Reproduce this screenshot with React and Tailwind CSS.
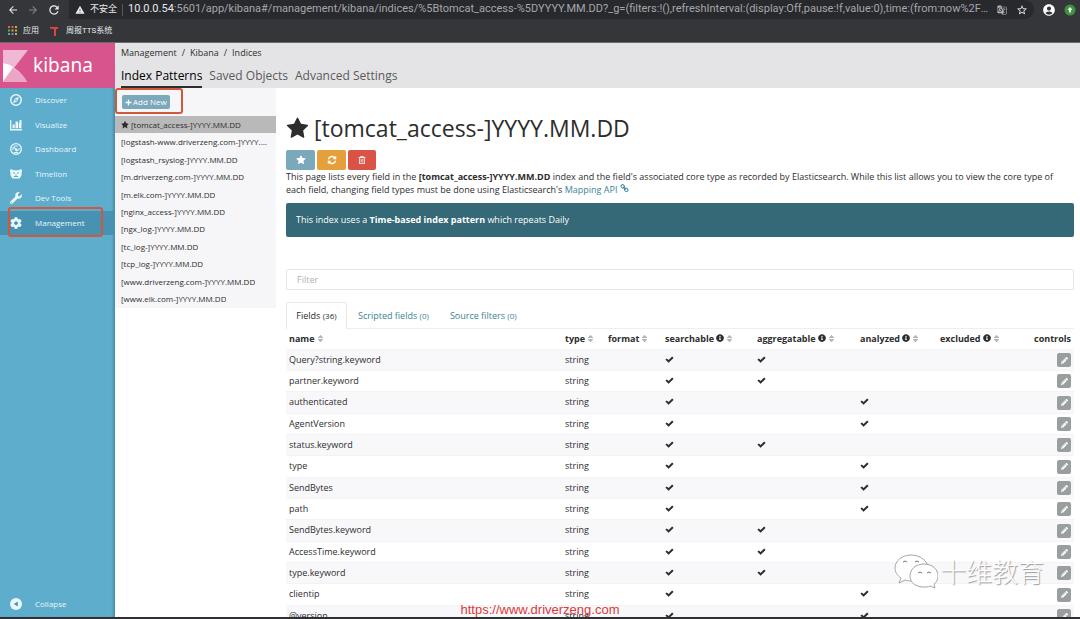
import React from 'react';
import { FaCog, FaInfoCircle, FaPencilAlt, FaPlus, FaRegTrashAlt, FaSort, FaWrench } from 'react-icons/fa';
import { MdAccountCircle, MdArrowBack, MdArrowForward, MdGTranslate, MdRefresh, MdStarBorder, MdWarning } from 'react-icons/md';

const StarIcon = ({ className }) => (
  <svg viewBox="0 0 1792 1792" fill="currentColor" className={className}>
    <path d="M1728 647q0 22-26 48l-363 354 86 500q1 7 1 20 0 21-10.5 35.5t-30.5 14.5q-19 0-40-12l-449-236-449 236q-22 12-40 12-21 0-31.5-14.5t-10.5-35.5q0-6 2-20l86-500-364-354q-25-27-25-48 0-37 56-46l502-73 225-455q19-41 49-41t49 41l225 455 502 73q56 9 56 46z" />
  </svg>
);

const RefreshIcon = ({ className }) => (
  <svg viewBox="0 0 1792 1792" fill="currentColor" className={className}>
    <path d="M1639 1056q0 5-1 7-64 268-268 434.5t-478 166.5q-146 0-282.5-55t-243.5-157l-129 129q-19 19-45 19t-45-19-19-45v-448q0-26 19-45t45-19h448q26 0 45 19t19 45-19 45l-137 137q71 66 161 102t187 36q134 0 250-65t186-179q11-17 53-117 8-23 30-23h192q13 0 22.5 9.5t9.5 22.5zm25-800v448q0 26-19 45t-45 19h-448q-26 0-45-19t-19-45 19-45l138-138q-148-137-349-137-134 0-250 65t-186 179q-11 17-53 117-8 23-30 23h-199q-13 0-22.5-9.5t-9.5-22.5v-7q65-268 270-434.5t480-166.5q146 0 284 55.5t245 156.5l130-129q19-19 45-19t45 19 19 45z" />
  </svg>
);

const ChainIcon = ({ className }) => (
  <svg viewBox="0 0 1792 1792" fill="currentColor" className={className}>
    <path d="M1520 1216q0-40-28-68l-208-208q-28-28-68-28-42 0-72 32 3 3 19 18.5t21.5 21.5 15 19 13 25.5 3.5 27.5q0 40-28 68t-68 28q-15 0-27.5-3.5t-25.5-13-19-15-21.5-21.5-18.5-19q-33 31-33 73 0 40 28 68l206 207q27 27 68 27 40 0 68-26l147-146q28-28 28-67zm-703-705q0-40-28-68l-206-207q-28-28-68-28-39 0-68 27l-147 146q-28 28-28 67 0 40 28 68l208 208q27 27 68 27 42 0 72-31-3-3-19-18.500t-21.500-21.500-15-19-13-25.500-3.500-27.500q0-40 28-68t68-28q15 0 27.500 3.500t25.500 13 19 15 21.500 21.500 18.500 19q33-31 33-73zm895 705q0 120-85 203l-147 146q-83 83-203 83-121 0-204-85l-206-207q-83-83-83-203 0-123 88-209l-88-88q-86 88-208 88-120 0-204-84l-208-208q-84-84-84-204t85-203l147-146q83-83 203-83 121 0 204 85l206 207q83 83 83 203 0 123-88 209l88 88q86-88 208-88 120 0 204 84l208 208q84 84 84 204z" />
  </svg>
);

const CheckIcon = () => (
  <svg viewBox="0 0 1792 1792" fill="currentColor" className="w-[9px] h-[9px]" role="img" aria-label="yes">
    <path d="M1671 566q0 40-28 68l-724 724-136 136q-28 28-68 28t-68-28l-136-136-362-362q-28-28-28-68t28-68l136-136q28-28 68-28t68 28l294 295 656-657q28-28 68-28t68 28l136 136q28 28 28 68z" />
  </svg>
);

const DiscoverIcon = () => (
  <svg viewBox="0 0 24 24" className="w-3 h-3">
    <circle cx="12" cy="12" r="10.5" fill="none" stroke="currentColor" strokeWidth="3" />
    <path fillRule="evenodd" d="M18 5.5 14.6 14.6 6 18.5 9.4 9.4zM12 10.4a1.7 1.7 0 1 0 0 3.4 1.7 1.7 0 0 0 0-3.4z" fill="currentColor" />
  </svg>
);

const VisualizeIcon = () => (
  <svg viewBox="0 0 24 24" fill="currentColor" className="w-3 h-3">
    <path d="M0 2h2.6v18.200H24V23H0zM5 11h4.500v7.500H5zM11 5h5v13.500h-5zM17.500 8h1.500V2h4v16.500h-5.500z" />
  </svg>
);

const DashboardIcon = () => (
  <svg viewBox="0 0 24 24" className="w-3 h-3" fill="none" stroke="currentColor">
    <circle cx="12" cy="12" r="10.7" strokeWidth="2.6" />
    <path d="M6 14.5a6.5 6.5 0 0 1 9.500-7.800M18 10a6.500 6.500 0 0 1-.5 5" strokeWidth="2" />
    <path d="m7.500 9 5.500 4.500" strokeWidth="2.400" />
    <circle cx="13" cy="14" r="2.400" fill="currentColor" />
    <path d="M8 19h8" strokeWidth="2" />
  </svg>
);

const TimelionIcon = () => (
  <svg viewBox="0 0 24 24" fill="currentColor" className="w-3 h-3">
    <path fillRule="evenodd" d="M0 3h5l2 1.500h10L19 3h5v5l-1 2v5l-4 6H5l-4-6v-5L0 8zM6.500 9v2.600h3V9zM14.500 9v2.600h3V9zM10 13.500l1.300 1.700v1H8v1.600h8v-1.600h-3.300v-1l1.300-1.700z" />
  </svg>
);

const CollapseIcon = () => (
  <svg viewBox="0 0 24 24" className="w-3 h-3">
    <circle cx="12" cy="12" r="12" fill="currentColor" />
    <path d="M15.500 7v10L7.500 12z" fill="#4a93b3" />
  </svg>
);

const navItems = [
  { label: 'Discover', icon: DiscoverIcon },
  { label: 'Visualize', icon: VisualizeIcon },
  { label: 'Dashboard', icon: DashboardIcon },
  { label: 'Timelion', icon: TimelionIcon },
  { label: 'Dev Tools', icon: () => <FaWrench className="w-3 h-3" /> },
  { label: 'Management', icon: () => <FaCog className="w-3 h-3" />, active: true },
];

const indices = [
  '[tomcat_access-]YYYY.MM.DD',
  '[logstash-www.driverzeng.com-]YYYY.MM.DD',
  '[logstash_rsyslog-]YYYY.MM.DD',
  '[m.driverzeng.com-]YYYY.MM.DD',
  '[m.elk.com-]YYYY.MM.DD',
  '[nginx_access-]YYYY.MM.DD',
  '[ngx_log-]YYYY.MM.DD',
  '[tc_log-]YYYY.MM.DD',
  '[tcp_log-]YYYY.MM.DD',
  '[www.driverzeng.com-]YYYY.MM.DD',
  '[www.elk.com-]YYYY.MM.DD',
];

const columns = [
  { label: 'name', width: '' },
  { label: 'type', width: 'w-[43px]' },
  { label: 'format', width: 'w-[57px]' },
  { label: 'searchable', width: 'w-[92px]', info: true },
  { label: 'aggregatable', width: 'w-[103px]', info: true },
  { label: 'analyzed', width: 'w-[80px]', info: true },
  { label: 'excluded', width: 'w-[93px]', info: true },
];

const fields = [
  { name: 'Query?string.keyword', aggregatable: true },
  { name: 'partner.keyword', aggregatable: true },
  { name: 'authenticated', analyzed: true },
  { name: 'AgentVersion', analyzed: true },
  { name: 'status.keyword', aggregatable: true },
  { name: 'type', analyzed: true },
  { name: 'SendBytes', analyzed: true },
  { name: 'path', analyzed: true },
  { name: 'SendBytes.keyword', aggregatable: true },
  { name: 'AccessTime.keyword', aggregatable: true },
  { name: 'type.keyword', aggregatable: true },
  { name: 'clientip', analyzed: true },
  { name: '@version', analyzed: true },
];

const appDots = ['#e06055', '#e06055', '#d9a441', '#5fae6b', '#d9a441', '#d9a441', '#5fae6b', '#5b8def', '#d9a441'];

function BrowserBar() {
  return (
    <div className="shrink-0 bg-[#35363a] border-b border-[#6b6b6e] text-[#e8eaed] font-['Roboto','Noto_Sans_CJK_SC',sans-serif] text-[11px]">
      <div className="flex items-center h-[19px] pl-[7px] pr-1">
        <button aria-label="Back"><MdArrowBack className="w-3 h-3" /></button>
        <button aria-label="Forward" className="ml-2 text-[#85868a]"><MdArrowForward className="w-3 h-3" /></button>
        <button aria-label="Reload" className="ml-2"><MdRefresh className="w-[14px] h-[14px]" /></button>
        <div className="flex flex-1 items-center min-w-0 h-full ml-2 mr-2 pl-[6px] pr-[6px] bg-[#28292d] rounded-r-full">
          <MdWarning className="shrink-0 w-[10px] h-[10px]" />
          <span className="shrink-0 ml-[5px] text-[9px]">不安全</span>
          <span className="shrink-0 w-px h-3 mx-[5px] bg-[#55565a]" />
          <span className="flex-1 truncate text-[#a5a7ab]">
            <span className="text-[#e8eaed]">10.0.0.54</span>
            :5601/app/kibana#/management/kibana/indices/%5Btomcat_access-%5DYYYY.MM.DD?_g=(filters:!(),refreshInterval:(display:Off,pause:!f,value:0),time:(from:now%2Fd,mode:quick,to:now%2F...
          </span>
          <button aria-label="Translate" className="ml-2"><MdGTranslate className="w-[10px] h-[10px] text-[#b4b6ba]" /></button>
          <button aria-label="Bookmark" className="ml-[9px]"><MdStarBorder className="w-3 h-3" /></button>
        </div>
        <button aria-label="Profile"><MdAccountCircle className="w-[14px] h-[14px] text-white" /></button>
        <button aria-label="Extension" className="ml-2">
          <svg viewBox="0 0 24 24" className="w-3 h-3">
            <circle cx="12" cy="12" r="11" fill="#3f8f45" />
            <path d="M12 6l5 5.500-3 .5v5h-4v-5l-3-.5z" fill="#e9f7df" />
          </svg>
        </button>
      </div>
      <div className="flex items-center h-[23px] pl-2 text-[8px]">
        <a href="#apps" className="flex items-center gap-[6px]">
          <svg viewBox="0 0 9 9" className="w-[9px] h-[9px]">
            {appDots.map((color, i) => (
              <rect key={i} x={(i % 3) * 3.5} y={Math.floor(i / 3) * 3.5} width="2" height="2" fill={color} />
            ))}
          </svg>
          应用
        </a>
        <a href="#tts" className="flex items-center gap-[6px] ml-[11px]">
          <svg viewBox="0 0 10 10" className="w-[10px] h-[10px]">
            <path d="M0 1h8v2H6v7H4V3L0 2.500z" fill="#d9473f" />
          </svg>
          周报TTS系统
        </a>
      </div>
    </div>
  );
}

function Sidebar() {
  return (
    <aside className="relative z-10 flex flex-col shrink-0 w-[115px] bg-[#5eadcc] text-[#e9f6fb] text-[8px] shadow-[inset_-3px_0_2px_-1px_#4a8fab]">
      <div className="flex items-center h-[45px] pl-[3px] gap-[5px] bg-[#d8548c]">
        <svg viewBox="0 0 25 32" className="w-[25px] h-8 shrink-0">
          <path d="M0 0h25L0 32z" fill="#f0b8d2" />
          <path d="M0 13c9 2 18 8 24 19H0z" fill="#f7d6e4" />
          <path d="M0 13q6 1 10 4L0 31z" fill="#fff" />
          <path d="M10 18q9 5 14 14H0z" fill="#eba6c5" />
        </svg>
        <span className="text-[19px] text-white font-['Noto_Sans','Open_Sans',sans-serif]">kibana</span>
      </div>
      <nav className="flex flex-col h-[147px]">
        {navItems.map((item) => (
          <a
            key={item.label}
            href={`#${item.label}`}
            className={`relative flex flex-1 items-center gap-[13px] pl-[10px] ${item.active ? 'bg-[#4792b3]' : ''}`}
          >
            <span className="w-3"><item.icon /></span>
            {item.label}
            {item.active && <span className="absolute -top-1 -bottom-[2px] left-2 right-3 border-2 border-[#d1583d] rounded-[3px]" />}
          </a>
        ))}
      </nav>
      <button className="flex items-center gap-[13px] h-6 mt-auto mb-px pl-[10px] text-left">
        <CollapseIcon />
        Collapse
      </button>
    </aside>
  );
}

function IndexList() {
  return (
    <div className="shrink-0 self-start w-[161px] bg-[#f6f6f8] text-[8px] text-[#2d2d2d]">
      <div className="relative flex items-center h-[28px] pl-[7px]">
        <button className="flex items-center gap-px h-[14px] px-[3px] rounded-[2px] bg-[#7ba8bb] text-white">
          <FaPlus className="w-[7px] h-[7px]" />
          Add New
        </button>
        <span className="absolute top-0 left-0 w-[68px] h-[26px] border-2 border-[#d1583d] rounded-[3px]" />
      </div>
      <ul className="grid auto-rows-fr h-[192px]">
        {indices.map((name, i) => (
          <li key={name} className={`flex items-center gap-[2px] min-w-0 px-[6px] ${i === 0 ? 'bg-[#b9b9b9]' : ''}`}>
            {i === 0 && <StarIcon className="shrink-0 w-2 h-2" />}
            <a href="#index" className="truncate">{name}</a>
          </li>
        ))}
      </ul>
    </div>
  );
}

function FieldsTable() {
  return (
    <table className="w-full table-fixed text-left">
      <thead>
        <tr className="h-[21px] border-t border-[#eeeeee]">
          {columns.map((col) => (
            <th key={col.label} className={`p-0 pl-[3px] pb-[2px] font-bold ${col.width}`}>
              <span className="flex items-center gap-[2px]">
                {col.label}
                {col.info && <FaInfoCircle className="w-2 h-2" />}
                <FaSort className="w-[9px] h-[9px] -ml-px text-[#b5b5b5]" />
              </span>
            </th>
          ))}
          <th className="w-[44px] p-0 pr-[3px] pb-[2px] font-bold text-right">controls</th>
        </tr>
      </thead>
      <tbody>
        {fields.map((field) => (
          <tr key={field.name} className="h-[21px] nth-[3n]:h-[22px] odd:bg-[#f8f8fa] border-t border-[#f3f3f4]">
            <td className="p-0 pl-[3px] pb-[2px]">{field.name}</td>
            <td className="p-0 pl-[3px] pb-[2px]">string</td>
            <td />
            <td className="p-0 pl-[3px] pb-[2px]"><CheckIcon /></td>
            <td className="p-0 pl-[3px] pb-[2px]">{field.aggregatable && <CheckIcon />}</td>
            <td className="p-0 pl-[3px] pb-[2px]">{field.analyzed && <CheckIcon />}</td>
            <td />
            <td className="p-0 pr-[3px]">
              <button aria-label={`Edit ${field.name}`} className="flex items-center justify-center w-[14px] h-[14px] ml-auto rounded-[2px] bg-[#999f9e] text-white">
                <FaPencilAlt className="w-[7px] h-[7px]" />
              </button>
            </td>
          </tr>
        ))}
      </tbody>
    </table>
  );
}

function IndexDetail() {
  return (
    <main className="flex-1 min-w-0 pl-[10px] pr-[6px] text-[9px] leading-[13px] text-[#2d2d2d]">
      <h1 className="flex items-center gap-[5px] pt-[23px] text-[23px] leading-[34px]">
        <StarIcon className="w-[23px] h-[23px]" />
        [tomcat_access-]YYYY.MM.DD
      </h1>
      <div className="flex gap-[2px] mt-[5px] text-white">
        <button aria-label="Set as default index" className="flex items-center justify-center w-[29px] h-5 rounded-[2px] bg-[#7ba8bb]">
          <StarIcon className="w-[10px] h-[10px]" />
        </button>
        <button aria-label="Refresh field list" className="flex items-center justify-center w-[29px] h-5 rounded-[2px] bg-[#e5a03c]">
          <RefreshIcon className="w-[10px] h-[10px]" />
        </button>
        <button aria-label="Remove index pattern" className="flex items-center justify-center w-[28px] h-5 rounded-[2px] bg-[#d95447]">
          <FaRegTrashAlt className="w-2 h-2" />
        </button>
      </div>
      <p>
        This page lists every field in the <strong>[tomcat_access-]YYYY.MM.DD</strong> index and the field's associated core type as recorded by Elasticsearch. While this list allows you to view the core type of each field, changing field types must be done using Elasticsearch's{' '}
        <a href="#mapping" className="text-[#3c8394]">
          Mapping API <ChainIcon className="inline w-[9px] h-[9px] align-baseline" />
        </a>
      </p>
      <div className="flex items-center h-[34px] mt-[7px] px-[10px] pb-[2px] rounded-[2px] bg-[#356977] text-white">
        <p>This index uses a <strong>Time-based index pattern</strong> which repeats Daily</p>
      </div>
      <input
        type="text"
        aria-label="Filter"
        placeholder="Filter"
        className="block w-full h-[21px] mt-8 px-[10px] border border-[#e6e6e6] rounded-[2px] placeholder:text-[#b0b0b0]"
      />
      <div className="flex h-[26px] mt-3 text-[#3c8394]">
        <button className="w-[61px] -mb-px pb-[2px] border border-b-0 border-[#e9e9e9] rounded-t-[2px] bg-white text-[#2d2d2d]">
          Fields <span className="text-[8px]">(36)</span>
        </button>
        <button className="ml-[11px]">Scripted fields <span className="text-[8px]">(0)</span></button>
        <button className="ml-[21px]">Source filters <span className="text-[8px]">(0)</span></button>
      </div>
      <FieldsTable />
    </main>
  );
}

function Watermark() {
  return (
    <div className="absolute right-[36px] bottom-[30px] flex items-center gap-[2px] text-[26px] leading-[36px] font-light text-white font-['Noto_Sans_CJK_SC',sans-serif] [text-shadow:1px_1px_1px_#999]">
      <svg viewBox="0 0 44 36" className="w-[44px] h-9" fill="#fff" stroke="#a5a5a5" strokeWidth="1">
        <path d="M17 2C8 2 1 8 1 15c0 4 2 7 6 10l-2 5 6-3c3 1 6 1 9 1 8-1 14-6 14-13S26 2 17 2z" />
        <path d="M30 11c-8 0-14 5-14 12s6 11 14 11c2 0 4 0 6-1l5 2-1-4c3-2 4-5 4-8 0-7-6-12-14-12z" />
        <path d="M9 9q2-2 4 0M21 9q2-2 4 0M24 20q2-2 4 0M33 20q2-2 4 0" fill="none" stroke="#777" />
      </svg>
      十维教育
    </div>
  );
}

export default function App() {
  return (
    <div className="relative flex flex-col h-screen overflow-hidden bg-white font-['Open_Sans','Noto_Sans_CJK_SC',sans-serif]">
      <BrowserBar />
      <div className="flex flex-1 min-h-0">
        <Sidebar />
        <div className="flex flex-col flex-1 min-w-0 overflow-hidden">
          <header className="shrink-0 h-[45px] pl-[6px] bg-[#e4e4e6] text-[#2d2d2d]">
            <div className="flex gap-[5px] pt-[3px] text-[9px] leading-[14px]">
              <a href="#management">Management</a>
              <span>/</span>
              <a href="#kibana">Kibana</a>
              <span>/</span>
              <span>Indices</span>
            </div>
            <nav className="flex gap-[7px] mt-[6px] text-[12px] leading-5 text-[#5a5a5a]">
              <a href="#patterns" className="h-[22px] border-b-2 border-[#2d2d2d] text-black">Index Patterns</a>
              <a href="#objects">Saved Objects</a>
              <a href="#settings">Advanced Settings</a>
            </nav>
          </header>
          <div className="flex flex-1 min-h-0">
            <IndexList />
            <IndexDetail />
          </div>
        </div>
      </div>
      <div className="shrink-0 h-[2px] bg-[#2f3033]" />
      <Watermark />
      <a href="https://www.driverzeng.com" className="absolute bottom-0 inset-x-0 text-center text-[13px] leading-[18px] text-[#d93a3a] font-['Liberation_Sans',sans-serif]">
        https://www.driverzeng.com
      </a>
    </div>
  );
}
